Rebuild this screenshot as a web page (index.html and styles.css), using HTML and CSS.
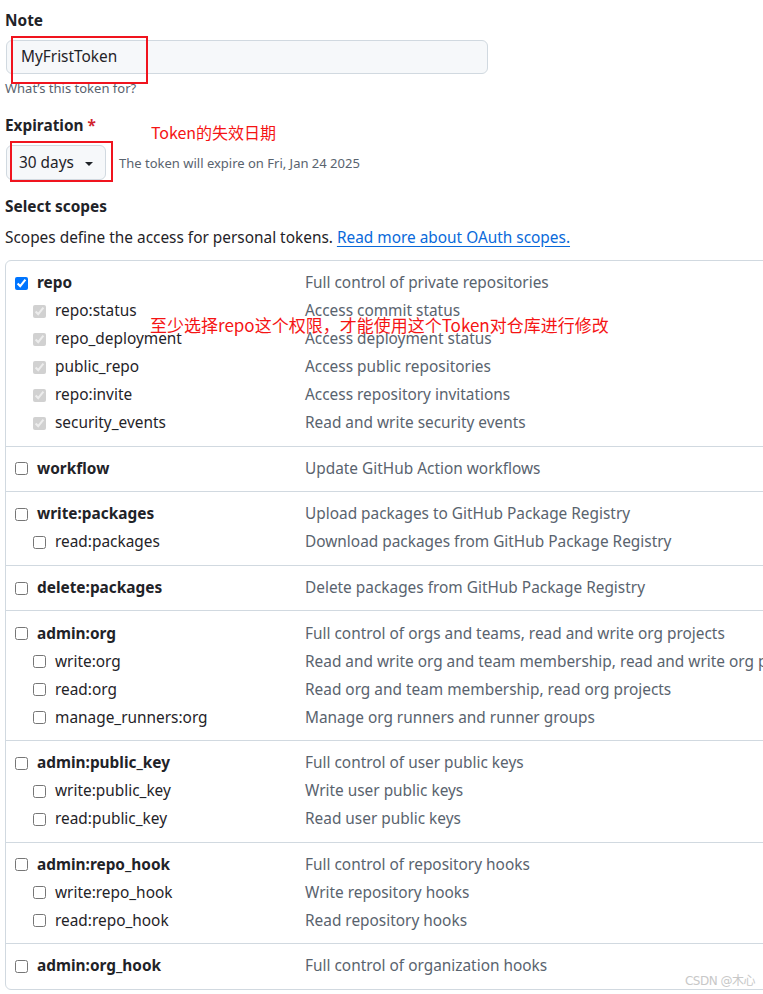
FILE: index.html
```html
<!DOCTYPE html>
<html lang="en">
<head>
<meta charset="utf-8">
<title>New personal access token</title>
<link rel="stylesheet" href="styles.css">
</head>
<body>
<div class="page">
  <div class="field">
    <div class="flabel">Note</div>
    <div class="note-wrap">
      <div class="input">MyFristToken</div>
      <div class="redbox note-box"></div>
    </div>
    <div class="hint">What’s this token for?</div>
  </div>

  <div class="field exp">
    <div class="exp-head">
      <div class="flabel">Expiration <span class="req">*</span></div>
      <div class="anno anno-exp">Token的失效日期</div>
    </div>
    <div class="exp-row">
      <div class="select-wrap">
        <div class="select">30 days <span class="caret"></span></div>
        <div class="redbox sel-box"></div>
      </div>
      <div class="exp-note">The token will expire on Fri, Jan 24 2025</div>
    </div>
  </div>

  <div class="flabel scopes-title">Select scopes</div>
  <div class="scopes-desc">Scopes define the access for personal tokens. <a href="#">Read more about OAuth scopes.</a></div>

  <div class="table">
    <div class="group">
      <div class="row main"><span class="name"><input type="checkbox" checked><b>repo</b></span><span class="desc">Full control of private repositories</span></div>
      <div class="row sub"><span class="name"><input type="checkbox" checked disabled>repo:status</span><span class="desc">Access commit status</span></div>
      <div class="row sub"><span class="name"><input type="checkbox" checked disabled>repo_deployment</span><span class="desc">Access deployment status</span></div>
      <div class="row sub"><span class="name"><input type="checkbox" checked disabled>public_repo</span><span class="desc">Access public repositories</span></div>
      <div class="row sub"><span class="name"><input type="checkbox" checked disabled>repo:invite</span><span class="desc">Access repository invitations</span></div>
      <div class="row sub"><span class="name"><input type="checkbox" checked disabled>security_events</span><span class="desc">Read and write security events</span></div>
      <div class="anno anno-repo">至少选择repo这个权限，才能使用这个Token对仓库进行修改</div>
    </div>
    <div class="group">
      <div class="row main"><span class="name"><input type="checkbox"><b>workflow</b></span><span class="desc">Update GitHub Action workflows</span></div>
    </div>
    <div class="group">
      <div class="row main"><span class="name"><input type="checkbox"><b>write:packages</b></span><span class="desc">Upload packages to GitHub Package Registry</span></div>
      <div class="row sub"><span class="name"><input type="checkbox">read:packages</span><span class="desc">Download packages from GitHub Package Registry</span></div>
    </div>
    <div class="group">
      <div class="row main"><span class="name"><input type="checkbox"><b>delete:packages</b></span><span class="desc">Delete packages from GitHub Package Registry</span></div>
    </div>
    <div class="group">
      <div class="row main"><span class="name"><input type="checkbox"><b>admin:org</b></span><span class="desc">Full control of orgs and teams, read and write org projects</span></div>
      <div class="row sub"><span class="name"><input type="checkbox">write:org</span><span class="desc">Read and write org and team membership, read and write org projects</span></div>
      <div class="row sub"><span class="name"><input type="checkbox">read:org</span><span class="desc">Read org and team membership, read org projects</span></div>
      <div class="row sub"><span class="name"><input type="checkbox">manage_runners:org</span><span class="desc">Manage org runners and runner groups</span></div>
    </div>
    <div class="group">
      <div class="row main"><span class="name"><input type="checkbox"><b>admin:public_key</b></span><span class="desc">Full control of user public keys</span></div>
      <div class="row sub"><span class="name"><input type="checkbox">write:public_key</span><span class="desc">Write user public keys</span></div>
      <div class="row sub"><span class="name"><input type="checkbox">read:public_key</span><span class="desc">Read user public keys</span></div>
    </div>
    <div class="group">
      <div class="row main"><span class="name"><input type="checkbox"><b>admin:repo_hook</b></span><span class="desc">Full control of repository hooks</span></div>
      <div class="row sub"><span class="name"><input type="checkbox">write:repo_hook</span><span class="desc">Write repository hooks</span></div>
      <div class="row sub"><span class="name"><input type="checkbox">read:repo_hook</span><span class="desc">Read repository hooks</span></div>
    </div>
    <div class="group">
      <div class="row main"><span class="name"><input type="checkbox"><b>admin:org_hook</b></span><span class="desc">Full control of organization hooks</span></div>
    </div>
  </div>
</div>
<div class="watermark">CSDN @木心</div>
</body>
</html>
```

FILE: styles.css
```css
html, body {
  margin: 0;
  padding: 0;
  background: #ffffff;
  overflow: hidden;
  height: 994px;
}
body {
  font-family: "Noto Sans", "Noto Sans CJK SC", sans-serif;
  color: #1f2328;
  font-size: 15.4px;
  position: relative;
}
.page {
  padding: 9px 0 0 5px;
  width: 900px;
}
.flabel {
  font-weight: 700;
  font-size: 15.4px;
  line-height: 24px;
  height: 24px;
}
.req { color: #d1242f; }
.note-wrap {
  position: relative;
  margin-top: 7px;
  width: 483px;
}
.input {
  box-sizing: border-box;
  height: 34px;
  margin-left: 1px;
  background: #f6f8fa;
  border: 1px solid #d1d9e0;
  border-radius: 6px;
  padding: 0 14px;
  line-height: 32px;
  font-size: 15.4px;
}
.redbox {
  position: absolute;
  border: 2px solid #f0141e;
  box-sizing: border-box;
}
.note-box { left: 6px; top: -4px; width: 137px; height: 48px; }
.hint {
  margin-top: 4px;
  font-size: 13px;
  line-height: 20px;
  color: #59636e;
}
.exp { margin-top: 16px; }
.exp-head {
  display: flex;
  align-items: flex-start;
  height: 24px;
}
.anno {
  color: #f51414;
  font-family: "Noto Sans CJK SC", sans-serif;
}
.anno-exp {
  font-size: 16px;
  margin-left: 55px;
  margin-top: 6px;
  line-height: 24px;
  height: 24px;
}
.exp-row {
  display: flex;
  align-items: center;
  margin-top: 7px;
}
.select-wrap { position: relative; }
.select {
  box-sizing: border-box;
  height: 35px;
  width: 100px;
  margin-left: 1px;
  background: #f6f8fa;
  border: 1px solid #d1d9e0;
  border-radius: 6px;
  padding: 0 12px 0 12px;
  display: flex;
  align-items: center;
  justify-content: space-between;
  font-size: 15.4px;
}
.caret {
  width: 0; height: 0;
  border-left: 4px solid transparent;
  border-right: 4px solid transparent;
  border-top: 4px solid #1f2328;
  margin-top: 2px;
}
.sel-box { left: 5px; top: -4px; width: 103px; height: 41px; }
.exp-note {
  margin-left: 13px;
  font-size: 13px;
  color: #59636e;
}
.scopes-title { margin-top: 15px; }
.scopes-desc {
  margin-top: 7px;
  line-height: 24px;
  font-size: 15.4px;
}
.scopes-desc a {
  color: #0969da;
  text-decoration: underline;
  text-underline-offset: 3px;
}
.table {
  margin-top: 10px;
  border: 1px solid #d1d9e0;
  border-radius: 6px;
  width: 880px;
}
.group {
  position: relative;
  padding: 8.3px 0;
  border-bottom: 1px solid #d1d9e0;
}
.group:last-child { border-bottom: 0; }
.row {
  display: flex;
  height: 28px;
  align-items: center;
  line-height: 28px;
}
.name {
  display: flex;
  align-items: center;
  flex: none;
  white-space: nowrap;
}
.row.main .name { padding-left: 9px; width: 290px; }
.row.sub .name { padding-left: 27px; width: 272px; }
.name input {
  margin: 0 9px 0 0;
  width: 13px;
  height: 13px;
  flex: none;
}
.name b { font-weight: 700; }
.desc {
  color: #59636e;
  white-space: nowrap;
}
.anno-repo {
  position: absolute;
  left: 144px;
  top: 52px;
  font-size: 17px;
  line-height: 24px;
  white-space: nowrap;
}
.watermark {
  position: absolute;
  right: 8px;
  top: 971px;
  font-size: 12px;
  color: #c8c8c8;
  font-family: "DejaVu Sans", "Noto Sans CJK SC", sans-serif;
  letter-spacing: -0.5px;
}
```
